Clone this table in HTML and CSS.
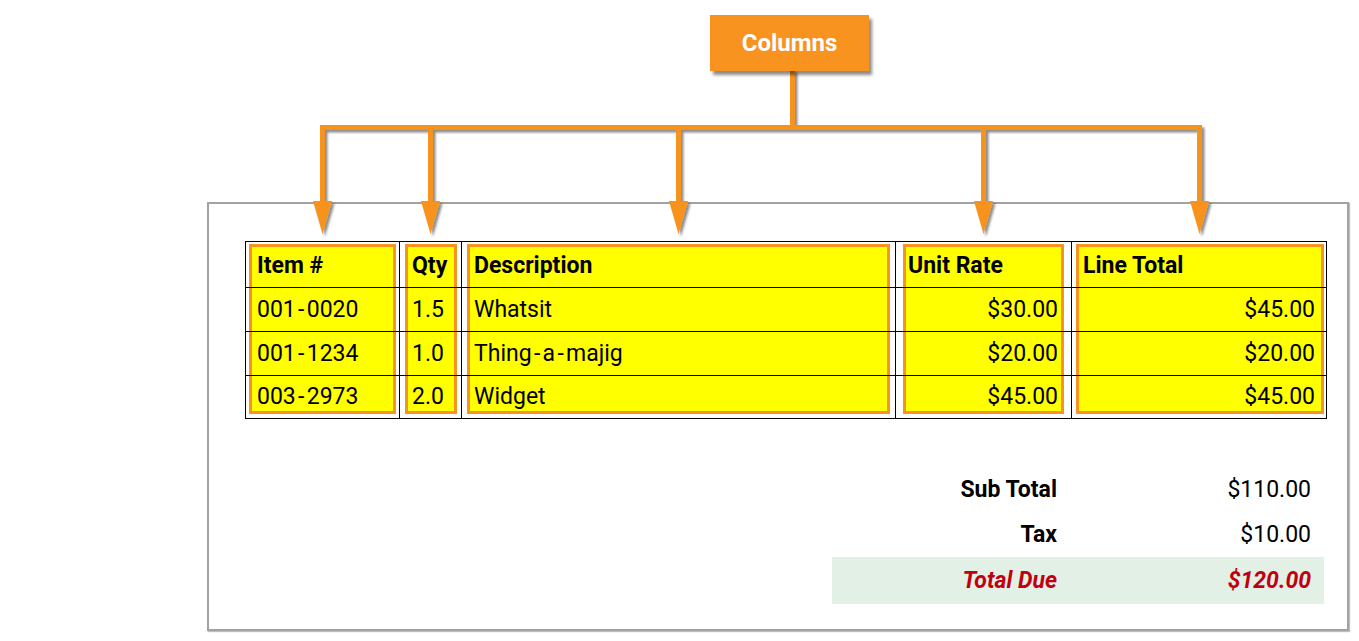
FILE: index.html
```html
<!DOCTYPE html>
<html lang="en">
<head>
<meta charset="utf-8">
<title>Invoice columns</title>
<link rel="stylesheet" href="styles.css">
</head>
<body>
<div class="page">
  <div class="doc">
    <table class="items">
      <thead>
        <tr>
          <th class="c1"><div class="hl">Item #</div></th>
          <th class="c2"><div class="hl">Qty</div></th>
          <th class="c3"><div class="hl">Description</div></th>
          <th class="c4"><div class="hl">Unit Rate</div></th>
          <th class="c5"><div class="hl">Line Total</div></th>
        </tr>
      </thead>
      <tbody>
        <tr>
          <td class="c1"><div class="hl">001<span class="hy">-</span>0020</div></td>
          <td class="c2"><div class="hl">1.5</div></td>
          <td class="c3"><div class="hl">Whatsit</div></td>
          <td class="c4"><div class="hl num">$30.00</div></td>
          <td class="c5"><div class="hl num">$45.00</div></td>
        </tr>
        <tr>
          <td class="c1"><div class="hl">001<span class="hy">-</span>1234</div></td>
          <td class="c2"><div class="hl">1.0</div></td>
          <td class="c3"><div class="hl">Thing<span class="hy">-</span>a<span class="hy">-</span>majig</div></td>
          <td class="c4"><div class="hl num">$20.00</div></td>
          <td class="c5"><div class="hl num">$20.00</div></td>
        </tr>
        <tr class="last">
          <td class="c1"><div class="hl">003<span class="hy">-</span>2973</div></td>
          <td class="c2"><div class="hl">2.0</div></td>
          <td class="c3"><div class="hl">Widget</div></td>
          <td class="c4"><div class="hl num">$45.00</div></td>
          <td class="c5"><div class="hl num">$45.00</div></td>
        </tr>
      </tbody>
    </table>

    <div class="totals">
      <div class="t-row">
        <div class="t-label">Sub Total</div>
        <div class="t-val">$110.00</div>
      </div>
      <div class="t-row">
        <div class="t-label">Tax</div>
        <div class="t-val">$10.00</div>
      </div>
      <div class="t-row due">
        <div class="t-label">Total Due</div>
        <div class="t-val">$120.00</div>
      </div>
    </div>
  </div>

  <svg class="connectors" width="1359" height="641" viewBox="0 0 1359 641" aria-hidden="true">
    <defs>
      <filter id="sh" filterUnits="userSpaceOnUse" x="0" y="0" width="1359" height="641">
        <feDropShadow dx="2.5" dy="2.5" stdDeviation="1" flood-color="#000" flood-opacity="0.45"/>
      </filter>
    </defs>
    <g filter="url(#sh)">
      <g fill="none" stroke="#F7931E" stroke-width="5">
        <path d="M792.5 70V127.5"/>
        <path d="M322.5 205V127.5H1199.5V205"/>
        <path d="M430.5 127.5V205"/>
        <path d="M678.5 127.5V205"/>
        <path d="M983.5 127.5V205"/>
      </g>
      <g fill="#F7931E">
        <path d="M313 201H332L322.5 234Z"/>
        <path d="M421 201H440L430.5 234Z"/>
        <path d="M669 201H688L678.5 234Z"/>
        <path d="M974 201H993L983.5 234Z"/>
        <path d="M1190 201H1209L1199.5 234Z"/>
      </g>
    </g>
  </svg>

  <div class="tag">Columns</div>
</div>
</body>
</html>
```

FILE: styles.css
```css
html, body {
  margin: 0;
  padding: 0;
  background: #fff;
}

body {
  font-family: Roboto, "Liberation Sans", Arial, sans-serif;
  color: #000;
}

.page {
  position: relative;
  width: 1359px;
  height: 641px;
  padding: 202px 0 0 207px;
  box-sizing: border-box;
  overflow: hidden;
}

.doc {
  width: 1142px;
  height: 429px;
  box-sizing: border-box;
  border: 2px solid #a2a2a2;
  box-shadow: 1px 1px 1px rgba(0, 0, 0, 0.25);
  padding: 37px 0 0 36px;
}

/* ---------- items table ---------- */
.items {
  border-collapse: separate;
  border-spacing: 0;
  table-layout: fixed;
  width: 1082px;
  border-top: 1px solid #000;
  border-left: 1px solid #000;
}

.items th,
.items td {
  box-sizing: border-box;
  padding: 0;
  border-right: 1px solid #000;
  border-bottom: 1px solid #000;
  vertical-align: top;
  font-size: 23px;
  text-align: left;
}

.items th {
  font-weight: 700;
}

.items td {
  font-weight: 400;
}

.hl {
  display: flex;
  align-items: center;
  background: #ffff00;
  border-left: 3px solid #f7931e;
  border-right: 3px solid #f7931e;
  height: 43px;
  white-space: nowrap;
}

.hy {
  margin: 0 2.3px;
}

.hl.num {
  justify-content: flex-end;
}

.items thead .hl {
  margin-top: 2px;
  border-top: 3px solid #f7931e;
  height: 37px;
  padding-bottom: 3px;
}

.items tr.last .hl {
  border-bottom: 3px solid #f7931e;
  margin-bottom: 4px;
  height: 29px;
  padding-top: 6px;
}

/* column geometry */
.items .c1 { width: 154px; padding: 0 3px; }
.items .c1 .hl { padding-left: 5px; }

.items .c2 { width: 62px; padding: 0 4px 0 5px; }
.items .c2 .hl { padding-left: 4px; }

.items .c3 { width: 434px; padding: 0 5px; }
.items .c3 .hl { padding-left: 4px; }

.items .c4 { width: 176px; padding: 0 7px; }
.items .c4 .hl { padding-left: 2px; padding-right: 3px; }

.items .c5 { width: 255px; padding: 0 2px 0 4px; }
.items .c5 .hl { padding-left: 4px; padding-right: 6px; }

/* ---------- totals ---------- */
.totals {
  margin: 48px 0 0 587px;
  width: 492px;
  font-size: 23px;
}

.t-row {
  display: grid;
  grid-template-columns: 238px 254px;
  align-items: center;
  height: 45px;
}

.t-label {
  text-align: right;
  padding-right: 13px;
  font-weight: 700;
}

.t-val {
  text-align: right;
  padding-right: 13px;
}

.t-row.due {
  height: 47px;
  background: #e2f0e6;
  color: #c0000f;
  font-weight: 700;
  font-style: italic;
}

.t-row.due .t-val {
  font-weight: 700;
}

/* ---------- annotation overlay ---------- */
.connectors {
  position: absolute;
  left: 0;
  top: 0;
  pointer-events: none;
}

.tag {
  position: absolute;
  left: 710px;
  top: 15px;
  width: 159px;
  height: 56px;
  background: #f7931e;
  color: #fff;
  font-weight: 700;
  font-size: 24px;
  display: flex;
  align-items: center;
  justify-content: center;
  box-shadow: 3px 4px 3px rgba(0, 0, 0, 0.45);
}
```
